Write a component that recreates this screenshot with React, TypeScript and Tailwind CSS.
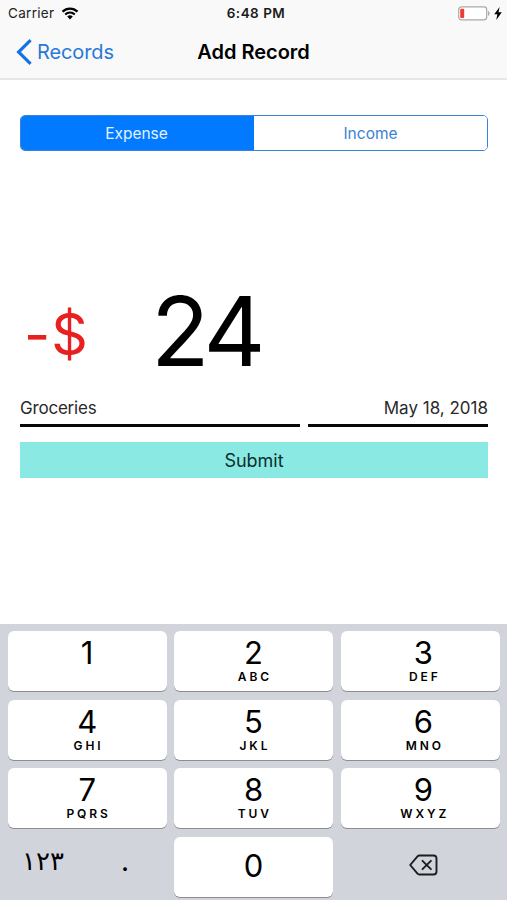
const digitClass = "text-[31px] leading-[36px] font-normal tracking-[-0.3px]";

function Key({ digit, letters, pad = "pr-px" }: { digit: string; letters?: string; pad?: string }) {
  return (
    <button className={`flex h-[60px] flex-col items-center rounded-[6px] bg-white pt-[4px] shadow-[0_1px_0_#8b8d91] ${pad}`}>
      <span className={digitClass}>{digit}</span>
      <span className="-mt-px pl-[3px] text-[12px] leading-[14px] font-semibold tracking-[2.9px]">
        {letters}
      </span>
    </button>
  );
}

function StatusBar() {
  return (
    <div className="flex h-[27px] items-center justify-between pr-[5px] pl-[8px] text-[13.5px] leading-none">
      <div className="flex flex-1 items-center gap-[7px] text-[#222]">
        <span className="pt-px tracking-[0.3px]">Carrier</span>
        <svg width="18" height="13" viewBox="0 0 17 13" fill="none" stroke="#000">
          <path d="M1 4.7C5.3 .6 11.7 .6 16 4.7" strokeWidth="2.3" />
          <path d="M3.7 7.6C6.5 5 10.5 5 13.3 7.6" strokeWidth="2.1" />
          <path d="M8.5 12.4 5.7 9.5a4 4 0 0 1 5.6 0Z" fill="#000" stroke="none" />
        </svg>
      </div>
      <span className="pt-px pl-[2px] font-semibold tracking-[0.5px] text-[#1b1b1b]">6:48 PM</span>
      <div className="flex flex-1 items-center justify-end gap-[3px]">
        <svg width="33" height="15" viewBox="0 0 33 15">
          <rect x=".7" y=".9" width="28" height="13" rx="2.8" fill="#fff" stroke="#a9a9ab" strokeWidth="1.2" />
          <rect x="2.2" y="2.7" width="4" height="9.4" rx="1" fill="#ed3b36" />
          <path d="M30 5c2.1.6 2.1 4.200 0 4.800Z" fill="#a9a9ab" />
        </svg>
        <svg width="8" height="13" viewBox="0 0 7 12">
          <path d="M5 0 0 6.700h2.900L1.900 12 7 4.900H4Z" fill="#000" />
        </svg>
      </div>
    </div>
  );
}

export default function App() {
  return (
    <div className="flex h-[900px] w-[507px] flex-col overflow-hidden bg-white font-['Inter','Liberation_Sans',sans-serif] text-black">
      <header className="h-[80px] shrink-0 border-b-2 border-[#e6e6e7] bg-[#f9f9f9]">
        <StatusBar />
        <nav className="grid h-[50px] grid-cols-[1fr_auto_1fr] items-center">
          <button className="flex items-center gap-[5px] pl-[16px] text-[#2878d8]">
            <svg width="16" height="26" viewBox="0 0 16 26" fill="none" stroke="#1474e6" strokeWidth="3.2">
              <path d="M14.600 1.200 2.600 13l12 11.800" />
            </svg>
            <span className="text-[20px] leading-none tracking-[-0.1px]">Records</span>
          </button>
          <h1 className="text-[20px] leading-none font-semibold">Add Record</h1>
          <div />
        </nav>
      </header>

      <main className="flex flex-1 flex-col pt-[35px] pr-[19px] pl-[20px]">
        <div className="grid h-[36px] shrink-0 grid-cols-2 overflow-hidden rounded-[5px] border border-[#3a82d8] text-[15.5px]">
          <button className="bg-[#027aff] pt-[2px] pr-[2px] text-[#e2f1ff]">Expense</button>
          <button className="bg-white pt-[2px] text-[#3c82d2]">Income</button>
        </div>

        <div className="mt-[130px] flex h-[100px] shrink-0 items-center">
          <span className="w-[131px] pt-[7px] pl-[4px] text-[57px] leading-none tracking-[1px] text-[#e8201f]">-$</span>
          <span className="text-[96px] leading-none tracking-[-4.5px]">24</span>
        </div>

        <div className="mt-[15px] flex h-[31px] shrink-0 gap-[8px] text-[17px] text-[#2a2a2a]">
          <div className="w-[280px] border-b-[3px] border-[#080808] leading-[25px] tracking-[-0.2px]">Groceries</div>
          <div className="flex-1 border-b-[3px] border-[#080808] text-right leading-[25px]">May 18, 2018</div>
        </div>

        <button className="mt-[15px] h-[36px] shrink-0 bg-[#8ae9e2] text-[18px] text-[#0b2f2e]">Submit</button>
      </main>

      <section className="grid h-[276px] shrink-0 grid-cols-[159px_159px_159px] content-start gap-x-[7.400px] gap-y-[8.600px] bg-[#d1d4da] pt-[7px] pl-[8px]">
        <Key digit="1" />
        <Key digit="2" letters="ABC" />
        <Key digit="3" letters="DEF" pad="pl-[6px]" />
        <Key digit="4" letters="GHI" />
        <Key digit="5" letters="JKL" />
        <Key digit="6" letters="MNO" pad="pl-[6px]" />
        <Key digit="7" letters="PQRS" />
        <Key digit="8" letters="TUV" />
        <Key digit="9" letters="WXYZ" pad="pl-[6px]" />
        <div className="flex h-[60px] items-center">
          <span className="w-[70px] pb-[11px] text-center font-['DejaVu_Sans',sans-serif] text-[26px] tracking-[-1.8px]">
            <bdo dir="ltr">١٢٣</bdo>
          </span>
          <span className="flex-1 pb-[12px] pl-[43px] text-[28px]">.</span>
        </div>
        <button className="flex h-[60px] items-center justify-center rounded-[6px] bg-white pr-px pb-[2px] shadow-[0_1px_0_#8b8d91]">
          <span className={digitClass}>0</span>
        </button>
        <button className="flex h-[60px] items-center justify-center pb-[3px] pl-[6px]">
          <svg width="29" height="22" viewBox="0 0 29 22" fill="none" stroke="#1c1d1f" strokeWidth="1.900" strokeLinejoin="round">
            <path d="M10.300 1.500H24.500a3 3 0 0 1 3 3v13a3 3 0 0 1-3 3H10.300a2.500 2.500 0 0 1-1.800-.8L1.200 11l7.300-8.700a2.500 2.500 0 0 1 1.800-.8Z" />
            <path d="m13.500 6.800 8.400 8.400m0-8.400-8.400 8.400" strokeLinecap="round" />
          </svg>
        </button>
      </section>
    </div>
  );
}
